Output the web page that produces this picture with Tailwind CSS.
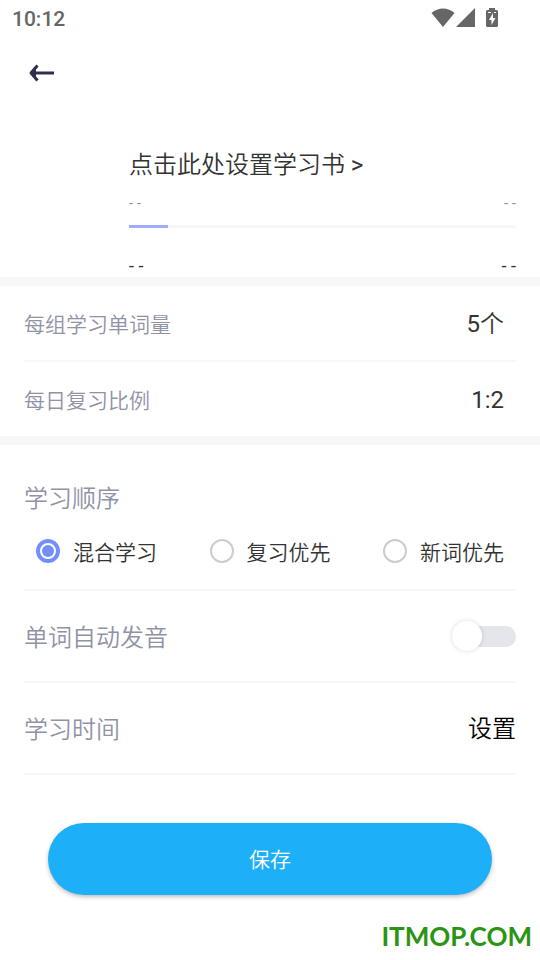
<!DOCTYPE html>
<html lang="zh-CN">
<head>
    <meta charset="UTF-8">
    <meta name="viewport" content="width=device-width, initial-scale=1.0">
    <title>学习设置</title>
    <script src="https://cdn.jsdelivr.net/npm/@tailwindcss/browser@4"></script>
</head>
<body class="min-h-screen flex flex-col bg-white text-[#333333] font-[Roboto,'Noto_Sans_CJK_SC',sans-serif]">
    <!-- Status bar -->
    <div class="h-9 pl-3 pr-9 flex items-center justify-between text-[#666666]">
        <span class="pt-0.5 text-[21px] leading-7 font-medium">10:12</span>
        <div class="flex items-center">
            <svg class="w-6 h-5" viewBox="0 0 24 20" fill="currentColor"><path d="M12 19 .500 5C7 -1 17 -1 23.500 5Z"/></svg>
            <svg class="ml-px w-5 h-5" viewBox="0 0 20 20" fill="currentColor"><path d="M19 0V19H0Z"/></svg>
            <svg class="ml-2 mr-1 w-4 h-5" viewBox="0 0 16 20"><path fill="currentColor" d="M5 0h6v2h1.500Q14 2 14 3.500v14Q14 19 12.500 19h-9Q2 19 2 17.500v-14Q2 2 3.500 2H5Z"/><path fill="#fff" d="M4 4h3v1H4ZM10 4h2v1h-2ZM9 5 5 12h2.500v5l4-7H9Z"/></svg>
        </div>
    </div>

    <!-- Header -->
    <header class="h-18 pt-0.5 px-6 flex items-center">
        <button type="button" aria-label="返回" class="p-1 text-[#2e2e4d]">
            <svg class="w-7 h-5" viewBox="0 0 28 20" fill="none" stroke="currentColor" stroke-width="3" stroke-linejoin="round"><path d="M9.500 2.500 3 10 9.500 17.500M3 10H26"/><path fill="currentColor" stroke="none" d="M3 10 8 5V15Z"/></svg>
        </button>
    </header>

    <main class="font-[350]">
        <!-- Book -->
        <section class="pt-[41px] pl-[129px] pr-6">
            <a href="#" class="block text-2xl leading-8">点击此处设置学习书 <span class="font-normal">&gt;</span></a>
            <div class="mt-3 flex justify-between text-[15px] leading-5 font-normal text-[#9092a5]">
                <span>- -</span>
                <span>- -</span>
            </div>
            <div class="mt-3 h-[3px] bg-[#f7f7f7]">
                <div class="h-full bg-[#9dacfb]" style="width: 10%"></div>
            </div>
            <div class="pt-7 pb-px flex justify-between text-lg leading-5 font-normal">
                <span>- -</span>
                <span>- -</span>
            </div>
        </section>

        <!-- Amounts -->
        <section class="border-y-9 border-[#f7f7f7] px-6">
            <button type="button" class="w-full h-[74px] pr-3 flex items-center justify-between">
                <span class="pt-1.5 text-[21px] text-[#9092a5]">每组学习单词量</span>
                <span class="pt-0.5 text-2xl"><span class="font-normal">5</span>个</span>
            </button>
            <div class="h-0.5 bg-[#f7f7f7]"></div>
            <button type="button" class="w-full h-[74px] pr-3 flex items-center justify-between">
                <span class="pt-1.5 text-[21px] text-[#9092a5]">每日复习比例</span>
                <span class="pt-0.5 text-2xl font-normal">1:2</span>
            </button>
        </section>

        <section class="px-6">
            <!-- Order -->
            <fieldset class="pb-[26px] border-b-2 border-[#f7f7f7]">
                <legend class="pt-9 text-2xl leading-9 text-[#9092a5]">学习顺序</legend>
                <div class="mt-[22px] px-3 flex justify-between text-[21px] leading-7">
                    <label class="flex items-center gap-[13px]">
                        <input type="radio" name="order" checked class="appearance-none size-6 rounded-full border-2 border-[#cccccc] checked:border-4 checked:border-[#738ffe] checked:bg-[#738ffe] checked:bg-clip-content checked:p-0.5">
                        <span class="-mb-1">混合学习</span>
                    </label>
                    <label class="flex items-center gap-[13px]">
                        <input type="radio" name="order" class="appearance-none size-6 rounded-full border-2 border-[#cccccc] checked:border-4 checked:border-[#738ffe] checked:bg-[#738ffe] checked:bg-clip-content checked:p-0.5">
                        <span class="-mb-1">复习优先</span>
                    </label>
                    <label class="flex items-center gap-[13px]">
                        <input type="radio" name="order" class="appearance-none size-6 rounded-full border-2 border-[#cccccc] checked:border-4 checked:border-[#738ffe] checked:bg-[#738ffe] checked:bg-clip-content checked:p-0.5">
                        <span class="-mb-1">新词优先</span>
                    </label>
                </div>
            </fieldset>

            <!-- Auto pronunciation -->
            <div class="h-[92px] border-b-2 border-[#f7f7f7] flex items-center justify-between">
                <label for="autoSpeak" class="pt-1 text-2xl text-[#9092a5]">单词自动发音</label>
                <input id="autoSpeak" type="checkbox" role="switch" class="appearance-none w-16 h-[21px] rounded-full bg-[#e5e6eb] flex items-center checked:justify-end checked:bg-[#738ffe] before:size-[30px] before:shrink-0 before:rounded-full before:bg-white before:shadow-[0_0_5px_rgba(0,0,0,0.15)]">
            </div>

            <!-- Study time -->
            <div class="h-[92px] border-b-2 border-[#f7f7f7] flex items-center justify-between text-2xl">
                <span class="pt-1 text-[#9092a5]">学习时间</span>
                <button type="button" class="pt-0.5 text-black">设置</button>
            </div>
        </section>

        <div class="px-12 pt-12">
            <button type="submit" class="w-full h-18 pt-1 rounded-full bg-[#1eaff9] text-white text-[21px] shadow-[0_2px_4px_rgba(0,0,0,0.25)]">保存</button>
        </div>
    </main>

    <footer class="mt-auto pr-2 pb-1.5 text-right">
        <span class="font-[Lato,sans-serif] font-bold text-[26px] leading-9 text-[#2a9413]">ITMOP.COM</span>
    </footer>
</body>
</html>
